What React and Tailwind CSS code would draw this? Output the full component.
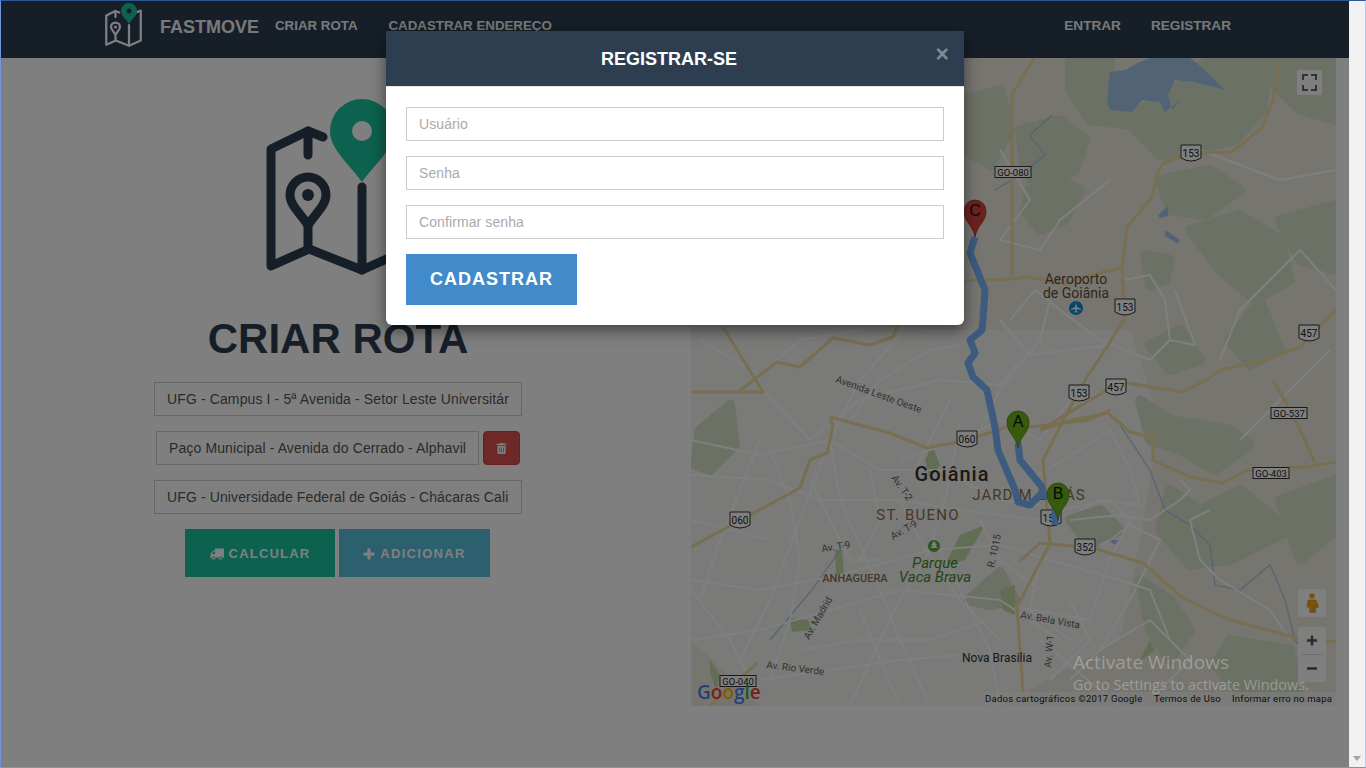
import { FaTruck, FaPlus, FaTrashAlt } from 'react-icons/fa';

const sans = 'font-["Liberation_Sans",Arial,sans-serif]';

// map roads, in page coordinates (the svg viewBox starts at 691,58)
const yellowRoads = [
  '1034,58 1012,95 1012,277',
  '691,291 1012,279 1028,277 1043,280 1062,284 1100,273 1123,267',
  '1280,58 1273,100 1262,128 1232,152 1193,153 1163,163 1157,173 1152,197 1127,227 1122,267 1125,317 1107,347 1087,377 1067,413 1043,460 1050,543 1017,607 1023,692',
  '1040,430 1073,420 1108,413 1130,432 1153,438 1153,460 1190,477 1223,483 1247,470 1307,467 1336,462',
  '1273,380 1297,423 1315,463',
  '1020,561 1040,543 1093,548 1143,563 1183,598 1230,620 1297,638 1336,642',
  '1127,383 1183,392 1207,380 1220,370 1265,360 1300,347 1336,310',
  '1040,430 1107,390 1127,383',
  '691,392 738,392 763,392 723,327',
  '738,392 777,362 800,367 833,338 870,345 893,337 900,320',
  '830,417 833,427 827,453 810,460 800,488 691,547',
  '830,417 890,433 927,448 967,440 1007,427 1030,427 1090,420 1110,410',
  '710,706 757,663',
];

const whiteRoads = [
  '691,440 760,455 830,440 880,470 940,470 1000,500 1040,505',
  '691,475 770,480 820,500 900,500 960,510 1040,520',
  '765,392 810,440 860,400 940,380 1000,385 1020,360',
  '900,335 860,380 830,440 800,520 770,600 740,660',
  '691,580 760,590 840,575 930,550 1000,545 1050,560',
  '691,640 760,630 830,610 900,590 1000,600 1060,640',
  '850,706 880,640 900,600 930,550 950,480 960,420',
  '770,450 790,500 800,560 790,620 770,680',
  '930,706 900,640 880,590 840,500 830,440',
  '691,590 730,640 760,700',
  '1000,706 990,650 970,610 950,570 930,530',
  '1040,640 1100,690 1120,706',
  '1017,607 1090,620 1110,560 1130,520 1110,500 1060,510',
  '1030,480 1080,450 1110,430 1130,470 1140,505 1100,500 1080,510',
  '1070,520 1120,515 1150,520 1180,500 1190,490 1180,480',
  '1100,545 1110,540 1130,525 1160,540 1145,570 1130,600 1100,650 1070,680',
  '1000,150 1030,200 1000,240 1040,250 1060,220 1110,180',
  '1010,320 1035,290 1060,310 1100,340 1150,360 1170,340',
  '1125,280 1150,275 1165,300 1170,340 1195,345 1175,290',
  '1000,320 1030,355 1070,350 1110,345',
  '975,440 1000,390 1040,340 1050,300',
  '1240,440 1330,350',
  '1200,150 1280,180 1336,170',
  '1220,360 1240,310 1300,250 1336,290',
  '1290,640 1270,610 1220,580 1200,560 1190,520 1210,510',
  '1100,650 1150,620 1190,660 1160,690',
  '1050,560 1120,580 1150,590 1170,640',
  '810,480 830,520 850,560 880,560',
  '690,520 730,530 770,540',
  '900,460 960,440 1000,420 1040,440 1070,400',
  '700,340 760,375 800,340 860,330',
  '760,440 740,490 720,540 700,600',
  '850,420 880,380 930,350 960,345',
  '870,470 880,520 860,560',
  '900,500 920,540 960,600 1000,640',
  '860,610 880,660 900,706',
  '800,650 860,640 930,640 990,620',
  '760,680 830,670 900,660 960,655',
  '950,400 930,440 915,470',
  '980,520 1000,560 1040,590',
  '1040,560 1030,610 1070,640',
  '1070,600 1090,640 1050,680',
];

const greens = [
  'M1070,58 L1110,60 1105,100 1140,110 1175,90 1195,70 1210,60 1270,60 1262,110 1235,140 1190,150 1160,155 1130,125 1090,120 1070,90Z',
  'M1260,58 L1336,58 1336,120 1300,110 1270,80Z',
  'M965,100 L1000,90 1010,130 990,165 965,150Z',
  'M1020,130 L1060,120 1085,140 1075,170 1040,190 1025,170Z',
  'M1030,190 L1060,180 1080,190 1065,220 1040,230 1025,210Z',
  'M1160,180 L1210,170 1240,190 1205,215 1170,210Z',
  'M1190,230 L1240,215 1280,240 1290,280 1255,300 1220,270Z',
  'M1280,220 L1336,205 1336,270 1300,260Z',
  'M1145,255 L1170,260 1165,280 1150,285Z',
  'M1230,340 L1260,300 1280,350 1250,365Z',
  'M1150,345 L1180,330 1200,360 1170,370Z',
  'M700,430 L730,405 735,445 710,470 695,465Z',
  'M1140,400 L1170,420 1230,430 1250,445 1215,470 1180,450 1150,440Z',
  'M1170,490 L1200,510 1240,490 1290,530 1230,560 1190,565 1160,530Z',
  'M1280,500 L1336,480 1336,530 1300,560Z',
  'M1140,580 L1170,600 1190,630 1170,660 1150,630Z',
  'M1230,640 L1290,650 1300,700 1240,692 1215,665Z',
  'M1070,520 L1100,510 1120,530 1090,545Z',
  'M1000,572 L1015,600 990,605 968,600Z',
];

const parks = [
  'M1000,590 L1015,585 1015,615 1003,610Z',
  'M925,460 L932,445 940,465 930,480Z',
  'M835,550 L842,550 844,575 836,575Z',
  'M790,618 L808,620 812,630 792,632Z',
  'M710,660 L720,675 716,690 710,672Z',
  'M960,535 L985,525 965,560 945,565Z',
  'M1140,660 L1150,640 1155,650 1135,665Z',
];

const waters = [
  'M1107,100 L1110,72 1125,70 1140,62 1150,58 1190,58 1205,70 1225,90 1195,82 1175,80 1168,95 1172,110 1180,100 1165,112 1160,102 1142,100 1132,112 1110,110Z',
  'M1158,215 L1168,206 1168,216 1160,218Z',
  'M1165,230 L1180,240 1178,244 1165,236Z',
  'M1050,510 L1060,512 1058,520Z',
  'M1108,540 L1118,540 1115,545Z',
];

const rivers = [
  '1120,425 1150,470 1165,510 1190,525 1210,545 1215,585 1240,590 1270,565 1285,600 1295,640 1310,660',
  '1052,115 1030,135 1045,155 1020,175 995,190',
  '840,550 812,590 770,640',
];

const streets = [
  { x: 835, y: 382, r: 20, t: 'Avenida Leste Oeste', w: 10 },
  { x: 822, y: 552, r: -8, t: 'Av. T-9', w: 10 },
  { x: 893, y: 540, r: -30, t: 'Av. T-9', w: 10 },
  { x: 891, y: 478, r: 55, t: 'Av. T-2', w: 10 },
  { x: 809, y: 640, r: -60, t: 'Av. Madrid', w: 10 },
  { x: 994, y: 568, r: -78, t: 'R. 1015', w: 10 },
  { x: 1020, y: 618, r: 10, t: 'Av. Bela Vista', w: 10 },
  { x: 1051, y: 668, r: -85, t: 'Av. W-1', w: 10 },
  { x: 766, y: 668, r: 7, t: 'Av. Rio Verde', w: 10 },
];

function Shield({ x, y, t }) {
  return (
    <g>
      <path d={`M${x - 10},${y - 8} h20 v13 q-10,6 -20,0 Z`} fill="#fff" stroke="#333" strokeWidth="1" strokeLinejoin="round" />
      <text x={x} y={y + 4} textAnchor="middle" fontSize="10" fill="#222" fontFamily="Roboto, sans-serif">{t}</text>
    </g>
  );
}

function RoadBadge({ x, y, t }) {
  return (
    <g>
      <rect x={x - 18} y={y - 5.5} width="36" height="11" fill="#fff" stroke="#333" strokeWidth="1" />
      <text x={x} y={y + 3.5} textAnchor="middle" fontSize="9.5" fill="#222" fontFamily="Roboto, sans-serif">{t}</text>
    </g>
  );
}

function Pin({ x, y, fill, stroke, t }) {
  return (
    <g transform={`translate(${x},${y})`}>
      <path d="M0,0 C-2,-12 -11,-15 -11,-26 A11,11 0 1 1 11,-26 C11,-15 2,-12 0,0Z" fill={fill} stroke={stroke} strokeWidth="0.8" />
      <text y="-21" textAnchor="middle" fontSize="16" fill="#111" fontFamily="Liberation Sans, sans-serif">{t}</text>
    </g>
  );
}

function MapLabel({ x, y, size, fill, children, ...rest }) {
  return (
    <text x={x} y={y} textAnchor="middle" fontSize={size} fill={fill} fontFamily="Roboto, sans-serif" {...rest}>
      {children}
    </text>
  );
}

function RouteMap() {
  return (
    <svg viewBox="691 58 645 648" className="block w-full h-full bg-[#ecebe1]">
      <path d="M930,330 L1130,330 1160,420 1140,540 1120,640 1000,706 760,706 691,640 691,300 800,300Z" fill="#f4f4f1" />
      {greens.map((d, i) => <path key={i} d={d} fill="#d9e3ca" stroke="#d9e3ca" strokeWidth="10" strokeLinejoin="round" />)}
      {parks.map((d, i) => <path key={i} d={d} fill="#c4dca6" />)}
      {waters.map((d, i) => <path key={i} d={d} fill="#a5c6ea" />)}
      {rivers.map((p, i) => <polyline key={i} points={p} fill="none" stroke="#a5c6ea" strokeWidth="1.2" />)}
      {whiteRoads.map((p, i) => <polyline key={i} points={p} fill="none" stroke="#fff" strokeWidth="2" strokeLinejoin="round" />)}
      {yellowRoads.map((p, i) => <polyline key={i} points={p} fill="none" stroke="#f0dca0" strokeWidth="3" strokeLinejoin="round" />)}

      <Shield x={1191} y={153} t="153" />
      <Shield x={1125} y={307} t="153" />
      <Shield x={1079} y={393} t="153" />
      <Shield x={1309} y={333} t="457" />
      <Shield x={1116} y={387} t="457" />
      <Shield x={967} y={439} t="060" />
      <Shield x={740} y={520} t="060" />
      <Shield x={1085} y={547} t="352" />
      <Shield x={1051} y={518} t="153" />
      <RoadBadge x={1013} y={172} t="GO-080" />
      <RoadBadge x={1289} y={413} t="GO-537" />
      <RoadBadge x={1271} y={473} t="GO-403" />
      <RoadBadge x={738} y={681} t="GO-040" />

      <MapLabel x={1076} y={284} size={14} fill="#6b4a35">Aeroporto</MapLabel>
      <MapLabel x={1076} y={298} size={14} fill="#6b4a35">de Goiânia</MapLabel>
      <circle cx={1076} cy={308} r={7} fill="#0f8fd8" />
      <path d="M1076,303 l1,4 4,2 v1 l-4,-1 -.5,2 1.5,1 v.6 l-2,-.6 -2,.6 v-.6 l1.5,-1 -.5,-2 -4,1 v-1 l4,-2Z" fill="#fff" />
      <MapLabel x={952} y={481} size={20} fill="#333" fontWeight="500" letterSpacing="1">Goiânia</MapLabel>
      <MapLabel x={1029} y={500} size={15} fill="#8a7152" letterSpacing="1">JARDIM GOIÁS</MapLabel>
      <MapLabel x={918} y={520} size={15} fill="#8a7152" letterSpacing="1.2">ST. BUENO</MapLabel>
      <MapLabel x={855} y={582} size={11} fill="#8a7152" fontWeight="500">ANHAGUERA</MapLabel>
      <MapLabel x={935} y={568} size={15} fill="#3f8f2a" fontStyle="italic">Parque</MapLabel>
      <MapLabel x={935} y={582} size={15} fill="#3f8f2a" fontStyle="italic">Vaca Brava</MapLabel>
      <circle cx={934} cy={546} r={6} fill="#5faa3c" />
      <path d="M934,541 l3,4 h-1.5 l2,3 h-7 l2,-3 h-1.5Z" fill="#fff" />
      <MapLabel x={997} y={662} size={12} fill="#333">Nova Brasilia</MapLabel>

      {streets.map((s) => (
        <text key={s.t + s.x} x={s.x} y={s.y} fontSize={s.w} fill="#666" fontFamily="Roboto, sans-serif" transform={`rotate(${s.r} ${s.x} ${s.y})`}>
          {s.t}
        </text>
      ))}

      <polyline points="983,320 982,330 970,340 975,353 968,363 973,377 987,390 995,427 998,450 1015,490 1018,502 1030,505 1040,495 1055,497 1055,525" fill="none" stroke="#78b6ff" strokeWidth="7" strokeLinejoin="round" />
      <polyline points="975,237 970,253 985,290 983,320" fill="none" stroke="#78b6ff" strokeWidth="7" strokeLinejoin="round" />
      <polyline points="1018,443 1020,460 1042,487 1043,497" fill="none" stroke="#78b6ff" strokeWidth="7" strokeLinejoin="round" />

      <Pin x={975} y={237} fill="#d9443a" stroke="#a5302a" t="C" />
      <Pin x={1018} y={448} fill="#6fb41e" stroke="#4c8a10" t="A" />
      <Pin x={1058} y={520} fill="#6fb41e" stroke="#4c8a10" t="B" />

      <text x={697} y={699} fontSize="19" fontFamily="Open Sans, sans-serif" fontWeight="600">
        <tspan fill="#4285f4">G</tspan>
        <tspan fill="#ea4335">o</tspan>
        <tspan fill="#fbbc05">o</tspan>
        <tspan fill="#4285f4">g</tspan>
        <tspan fill="#34a853">l</tspan>
        <tspan fill="#ea4335">e</tspan>
      </text>

      <rect x={985} y={692} width={351} height={14} fill="#fff" fillOpacity="0.6" />
      <g fontSize="9.5" fill="#222" fontFamily="Roboto, sans-serif" letterSpacing="0.25">
        <text x={985} y={702}>Dados cartográficos ©2017 Google</text>
        <text x={1154} y={702}>Termos de Uso</text>
        <text x={1232} y={702}>Informar erro no mapa</text>
      </g>

      <rect x={1297} y={70} width={25} height={25} fill="#fff" />
      <path d="M1303,80 v-5 h5 M1316,80 v-5 h-5 M1303,85 v5 h5 M1316,85 v5 h-5" fill="none" stroke="#666" strokeWidth="2" />

      <rect x={1298} y={589} width={28} height={28} rx={2} fill="#fff" />
      <circle cx={1312} cy={596} r={2.8} fill="#f5a81c" />
      <path d="M1308,600 h8 l2.5,7 -2,.5 -.8,-3 v8 h-2.7 v-6 h-.5 v6 h-2.7 v-8 l-.8,3 -2,-.5Z" fill="#f5a81c" stroke="#c98000" strokeWidth="0.5" />

      <rect x={1298} y={627} width={28} height={55} rx={2} fill="#fff" />
      <line x1={1302} y1={654.5} x2={1322} y2={654.5} stroke="#ddd" />
      <path d="M1307,640.5 h10 M1312,635.5 v10 M1307,668.5 h10" stroke="#555" strokeWidth="2.4" />
    </svg>
  );
}

function LogoIcon({ stroke, className }) {
  return (
    <svg viewBox="0 0 148 176" className={className}>
      <g fill="none" stroke={stroke} strokeWidth="9" strokeLinecap="round" strokeLinejoin="round">
        <path d="M57,38 L42,32 L5,50 V167 L43,150 L96,171 L143,150 V30 L124,38" />
        <path d="M42,32 V56 M42,126 V150 M96,88 V171" />
        <path d="M42,126 C34,114 24,106 24,96 A18,18 0 0 1 60,96 C60,106 50,114 42,126Z" />
      </g>
      <circle cx="42" cy="96" r="6" fill={stroke} />
      <path
        fillRule="evenodd"
        d="M96,83 C84,66 64,50 64,32 A32,32 0 0 1 128,32 C128,50 108,66 96,83Z M96,22 A10,10 0 1 0 96,42 A10,10 0 1 0 96,22Z"
        fill="#1ac29f"
      />
    </svg>
  );
}

function RouteInput({ value, width }) {
  return (
    <input
      readOnly
      value={value}
      className={`${width} h-[34px] px-3 border border-[#ccc] bg-white text-[14px] text-[#555] tracking-[0.12px] outline-none ${sans}`}
    />
  );
}

function ModalInput({ placeholder }) {
  return (
    <input
      placeholder={placeholder}
      className={`w-full h-[34px] px-3 border border-[#ccc] bg-white text-[14px] tracking-[0.1px] outline-none placeholder:text-[#aaa] ${sans}`}
    />
  );
}

export default function App() {
  return (
    <div className={`h-[768px] flex overflow-hidden border border-t-[#2b5797] border-l-[#6f94dc] border-r-[#b8c9f0] border-b-[#6f94dc] ${sans}`}>
      <div className="relative flex-1 min-w-0 flex flex-col bg-white">
        <nav className="h-[57px] shrink-0 flex bg-[#2c3e50] text-[#f2f2f2] font-bold">
          <LogoIcon stroke="#ffffff" className="ml-[104px] mt-[2px] w-[37px] h-[44px] shrink-0" />
          <a className="ml-[18px] mt-[16px] text-[18px] leading-[20px]">FASTMOVE</a>
          <a className="ml-[16px] mt-[17px] text-[13.3px] leading-[16px]">CRIAR ROTA</a>
          <a className="ml-[31px] mt-[17px] text-[13.3px] leading-[16px]">CADASTRAR ENDEREÇO</a>
          <a className="ml-auto mt-[17px] text-[13.6px] leading-[16px]">ENTRAR</a>
          <a className="ml-[30px] mr-[118px] mt-[17px] text-[13.6px] leading-[16px]">REGISTRAR</a>
        </nav>

        <div className="flex-1 flex min-h-0">
          <section className="w-[674px] shrink-0 flex flex-col items-center">
            <LogoIcon stroke="#2c3e50" className="mt-[41px] ml-[4px] w-[148px] h-[176px] shrink-0" />
            <h1 className="mt-[41px] text-[42px] leading-[46px] font-bold text-[#2c3e50]">CRIAR ROTA</h1>
            <div className="mt-[20px] flex flex-col gap-[15px] items-center">
              <RouteInput value="UFG - Campus I - 5ª Avenida - Setor Leste Universitário" width="w-[368px]" />
              <div className="flex gap-[4px]">
                <RouteInput value="Paço Municipal - Avenida do Cerrado - Alphaville" width="w-[323px]" />
                <button className="w-[37px] h-[34px] rounded-[4px] bg-[#d9534f] border border-[#d43f3a] text-white flex items-center justify-center">
                  <FaTrashAlt className="text-[11px]" />
                </button>
              </div>
              <RouteInput value="UFG - Universidade Federal de Goiás - Chácaras Califórnia" width="w-[368px]" />
            </div>
            <div className="mt-[15px] mr-[1px] flex gap-[4px]">
              <button className="w-[150px] h-[48px] pt-[1px] bg-[#1ac29f] text-white font-bold text-[13px] tracking-[1.2px] flex items-center justify-center gap-[5px]">
                <FaTruck className="-scale-x-100 text-[14px]" />
                CALCULAR
              </button>
              <button className="w-[151px] h-[48px] pt-[1px] bg-[#5bc0de] text-white font-bold text-[13px] tracking-[1.3px] flex items-center justify-center gap-[5px]">
                <FaPlus className="text-[12px] stroke-[40px]" />
                ADICIONAR
              </button>
            </div>
          </section>
          <section className="ml-[16px] mr-[13px] w-[645px] h-[648px]">
            <RouteMap />
          </section>
        </div>

        <div className="absolute inset-0 bg-black/50 flex justify-center items-start pt-[30px]">
          <div className="w-[578px] bg-white rounded-b-[6px] shadow-[0_5px_15px_rgba(0,0,0,0.5)] overflow-hidden">
            <div className="relative h-[56px] bg-[#2c3e50] border-b border-[#e5e5e5] flex items-center justify-center">
              <h4 className="ml-[-12px] mt-[2px] text-[18px] font-bold text-white">REGISTRAR-SE</h4>
              <span className="absolute right-[15px] top-[10px] text-[23px] leading-[26px] font-bold text-[#7f8b97]">×</span>
            </div>
            <div className="px-[20px] pt-[20px] pb-[20px] flex flex-col gap-[15px] items-start">
              <ModalInput placeholder="Usuário" />
              <ModalInput placeholder="Senha" />
              <ModalInput placeholder="Confirmar senha" />
              <button className="w-[171px] h-[51px] bg-[#428bca] text-white font-bold text-[18px] tracking-[1px]">CADASTRAR</button>
            </div>
          </div>
        </div>

        <div className="absolute left-[1072px] top-[648px] font-['Open_Sans',sans-serif] text-white/30 pointer-events-none">
          <div className="text-[19px] leading-[26px]">Activate Windows</div>
          <div className="mt-[1px] text-[14.4px] leading-[18px]">Go to Settings to activate Windows.</div>
        </div>
      </div>

      <div className="w-[16px] shrink-0 bg-[#f1f1f1] flex flex-col justify-end items-center pb-[6px]">
        <div className="w-0 h-0 border-x-[4px] border-x-transparent border-t-[5px] border-t-[#a3a3a3]" />
      </div>
    </div>
  );
}
